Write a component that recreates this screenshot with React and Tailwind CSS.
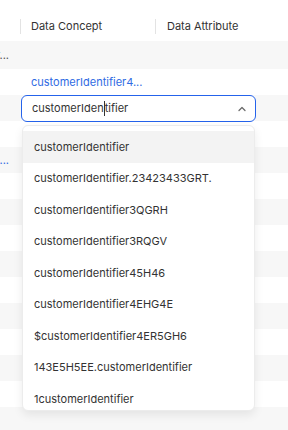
import React from "react";

const Chevron = () => (
  <svg width="10" height="10" viewBox="0 0 10 10" fill="none" stroke="#6b6b6b" strokeWidth="1.3" strokeLinecap="round" strokeLinejoin="round">
    <path d="M2 6.5 L5 3.5 L8 6.5" />
  </svg>
);

const items = [
  "customerIdentifier",
  "customerIdentifier.23423433GRT.",
  "customerIdentifier3QGRH",
  "customerIdentifier3RQGV",
  "customerIdentifier45H46",
  "customerIdentifier4EHG4E",
  "$customerIdentifier4ER5GH6",
  "143E5H5EE.customerIdentifier",
  "1customerIdentifier",
];

function Row({ gray, left, leftBlue, tall, children }) {
  return (
    <div className={`flex ${tall ? "h-[28px]" : "h-[26px]"} items-center ${gray ? "bg-[#f7f7f7]" : "bg-white"}`}>
      <div className="w-[21px] shrink-0 overflow-hidden flex justify-end pr-[12px]">
        {left ? (
          <span className={`whitespace-nowrap text-[11px] ${leftBlue ? "text-[#2f6be3]" : "text-[#555]"}`}>{left}</span>
        ) : null}
      </div>
      <div className="flex-1 min-w-0">{children}</div>
    </div>
  );
}

export default function App() {
  const rest = [];
  for (let i = 6; i < 16; i++) rest.push(i);
  return (
    <div className="relative w-[288px] h-[430px] overflow-hidden bg-white" style={{ fontFamily: "Inter, 'Noto Sans', sans-serif" }}>
      <div className="flex h-[41px] items-end pb-[7px] text-[11px] text-[#333]">
        <div className="w-[20px] shrink-0" />
        <div className="w-[135px] shrink-0 flex items-center h-[15px] border-l border-[#e3e3e3] pl-[10px]">Data Concept</div>
        <div className="flex-1 flex items-center h-[15px] border-l border-[#e3e3e3] pl-[11px]">Data Attribute</div>
      </div>
      <Row gray tall left="customerIdentifier..." />
      <Row>
        <div className="pl-[10px] text-[11px] text-[#2f6be3]">customerIdentifier4...</div>
      </Row>
      <Row gray>
        <div className="h-[27px] w-[235px] flex items-center justify-between rounded-[6px] border-[1.5px] border-[#2563eb] bg-white pl-[10px] pr-[8px] text-[11px] text-[#333] mt-[1px]">
          <span className="flex items-center">customerIden<span className="inline-block w-[1px] h-[15px] bg-[#333]" />tifier</span>
          <Chevron />
        </div>
      </Row>
      <Row />
      <Row gray left="customerIdentifi..." leftBlue />
      {rest.map((i) => (
        <Row key={i} gray={i % 2 === 1} />
      ))}

      <div className="absolute left-[22px] top-[125px] w-[233px] h-[286px] overflow-hidden rounded-[6px] bg-white border border-[#ececec] shadow-[0_4px_10px_rgba(0,0,0,0.08)] pt-[5px]">
        {items.map((t, i) => (
          <div
            key={t}
            className={`h-[31.5px] flex items-center pl-[11px] text-[11px] text-[#333] ${i === 0 ? "bg-[#f3f3f3]" : ""}`}
          >
            {t}
          </div>
        ))}
      </div>
    </div>
  );
}
